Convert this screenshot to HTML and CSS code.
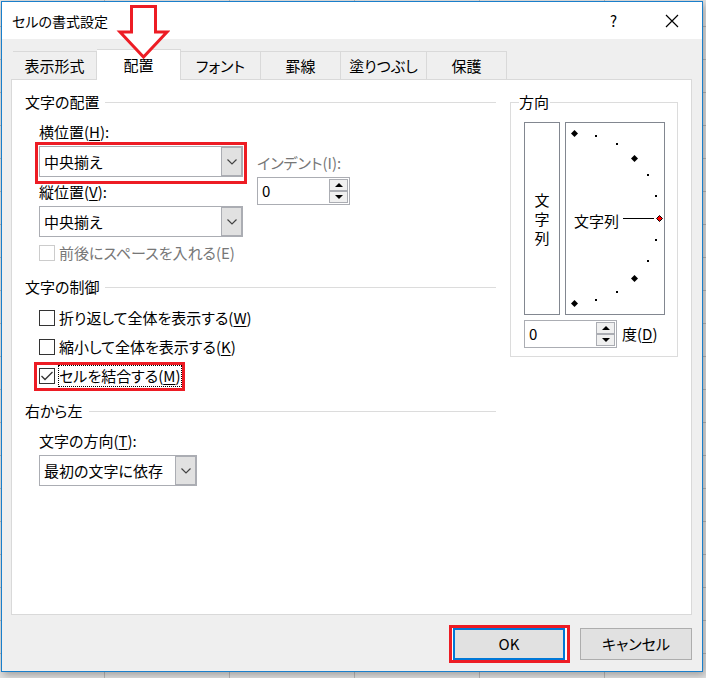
FILE: index.html
```html
<!DOCTYPE html>
<html lang="ja">
<head>
<meta charset="utf-8">
<meta name="viewport" content="width=device-width, initial-scale=1">
<title>セルの書式設定</title>
<link rel="stylesheet" href="styles.css">
</head>
<body>
<main class="dialog">
  <header class="titlebar">
    <h1 class="title">セルの書式設定</h1>
    <button class="title-button" type="button" aria-label="ヘルプ">?</button>
    <button class="title-button" type="button" aria-label="閉じる">
      <svg width="14" height="14" viewBox="0 0 14 14" aria-hidden="true"><path d="M1 1 13 13M13 1 1 13" stroke="#000" stroke-width="1.2" fill="none"/></svg>
    </button>
  </header>

  <div class="content">
    <nav class="tabs" role="tablist">
      <button class="tab tab-wide" type="button" role="tab">表示形式</button>
      <button class="tab tab-wide tab-active" type="button" role="tab" aria-selected="true">配置</button>
      <button class="tab" type="button" role="tab">フォント</button>
      <button class="tab" type="button" role="tab">罫線</button>
      <button class="tab tab-long" type="button" role="tab">塗りつぶし</button>
      <button class="tab" type="button" role="tab">保護</button>
    </nav>

    <div class="panel" role="tabpanel">
      <div class="settings">
        <h2 class="heading">文字の配置</h2>
        <div class="section placement">
          <div class="stack">
            <div class="field">
              <label for="horizontal">横位置(<u>H</u>):</label>
              <div class="select marked marked-field">
                <select id="horizontal"><option>中央揃え</option></select>
                <span class="arrow"><svg width="12" height="8" viewBox="0 0 12 8"><path d="M1.5 1.5 6 6 10.5 1.5"/></svg></span>
              </div>
            </div>
            <div class="field">
              <label for="vertical">縦位置(<u>V</u>):</label>
              <div class="select">
                <select id="vertical"><option>中央揃え</option></select>
                <span class="arrow"><svg width="12" height="8" viewBox="0 0 12 8"><path d="M1.5 1.5 6 6 10.5 1.5"/></svg></span>
              </div>
            </div>
            <div class="check">
              <input type="checkbox" id="space" disabled>
              <label for="space">前後にスペースを入れる(E)</label>
            </div>
          </div>
          <div class="field indent">
            <label class="muted" for="indent">インデント(I):</label>
            <div class="spinner">
              <input type="text" id="indent" value="0">
              <span class="steps">
                <button type="button" aria-label="増やす"><svg width="8" height="4" viewBox="0 0 8 4"><path d="M4 0 8 4H0z"/></svg></button>
                <button type="button" aria-label="減らす"><svg width="8" height="4" viewBox="0 0 8 4"><path d="M0 0H8L4 4z"/></svg></button>
              </span>
            </div>
          </div>
        </div>

        <h2 class="heading">文字の制御</h2>
        <div class="section checks">
          <div class="check">
            <input type="checkbox" id="wrap">
            <label for="wrap">折り返して全体を表示する(<u>W</u>)</label>
          </div>
          <div class="check">
            <input type="checkbox" id="shrink">
            <label for="shrink">縮小して全体を表示する(<u>K</u>)</label>
          </div>
          <div class="check marked marked-check">
            <input type="checkbox" id="merge" checked>
            <svg class="tick" width="16" height="16" viewBox="0 0 16 16" aria-hidden="true"><path d="M2.5 8 6 11.5 13.5 4"/></svg>
            <label class="focused" for="merge">セルを結合する(<u>M</u>)</label>
          </div>
        </div>

        <h2 class="heading">右から左</h2>
        <div class="section field">
          <label for="direction">文字の方向(<u>T</u>):</label>
          <div class="select select-short">
            <select id="direction"><option>最初の文字に依存</option></select>
            <span class="arrow"><svg width="12" height="8" viewBox="0 0 12 8"><path d="M1.5 1.5 6 6 10.5 1.5"/></svg></span>
          </div>
        </div>
      </div>

      <fieldset class="orientation">
        <legend>方向</legend>
        <div class="orientation-body">
          <div class="orientation-views">
            <button class="vertical-text" type="button"><span>文字列</span></button>
            <div class="dial">
              <svg width="98" height="191" viewBox="0 0 98 191">
                <g class="dial-points">
                  <path d="M8.500 7 12 10.500 8.500 14 5 10.500z"/>
                  <path d="M68.500 32 72 35.500 68.500 39 65 35.500z"/>
                  <path d="M68.500 152 72 155.500 68.500 159 65 155.500z"/>
                  <path d="M8.500 177 12 180.500 8.500 184 5 180.500z"/>
                  <path d="M29 12h2v2h-2zM50 20h2v2h-2zM81 51h2v2h-2zM89 72h2v2h-2zM89 116h2v2h-2zM81 137h2v2h-2zM50 168h2v2h-2zM29 176h2v2h-2zM57 95h31v1H57z"/>
                  <path class="dial-current" d="M93.500 92.500 96.500 95.500 93.500 98.500 90.500 95.500z"/>
                </g>
                <text x="8" y="104">文字列</text>
              </svg>
            </div>
          </div>
          <div class="degrees">
            <div class="spinner">
              <input type="text" id="degrees" value="0">
              <span class="steps">
                <button type="button" aria-label="増やす"><svg width="8" height="4" viewBox="0 0 8 4"><path d="M4 0 8 4H0z"/></svg></button>
                <button type="button" aria-label="減らす"><svg width="8" height="4" viewBox="0 0 8 4"><path d="M0 0H8L4 4z"/></svg></button>
              </span>
            </div>
            <label for="degrees">度(<u>D</u>)</label>
          </div>
        </div>
      </fieldset>
    </div>

    <footer class="actions">
      <span class="marked marked-button"><button class="action action-default" type="button">OK</button></span>
      <button class="action" type="button">キャンセル</button>
    </footer>
  </div>

  <svg class="pointer" width="54" height="58" viewBox="0 0 54 58" aria-hidden="true"><path d="M15.500 4.500H39.500V30H51L27.500 55 4 30H15.500z"/></svg>
</main>
</body>
</html>
```

FILE: styles.css
```css
* {
  box-sizing: border-box;
}

body {
  margin: 0;
  min-height: 100vh;
  padding: 1px 3px 6px 1px;
  display: flex;
  background-color: #e2e2e2;
  background-image:
    repeating-linear-gradient(to right, transparent 0 104px, #b9b9b9 104px 105px, transparent 105px 125px),
    repeating-linear-gradient(to bottom, transparent 0 26px, #b9b9b9 26px 27px, transparent 27px 33px);
  color: #000;
  font: 15px/20px "Noto Sans CJK JP", sans-serif;
  font-feature-settings: "palt";
}

button,
input,
select {
  margin: 0;
  padding: 0;
  border: 0;
  border-radius: 0;
  background: none;
  color: inherit;
  font: inherit;
  font-feature-settings: inherit;
}

h1,
h2 {
  margin: 0;
  font-size: 15px;
  font-weight: 400;
}

u {
  text-underline-offset: 2px;
}

.dialog {
  position: relative;
  flex: 1;
  display: flex;
  flex-direction: column;
  border: 1px solid #1a7fcb;
  background: #efefef;
  box-shadow: 2px 3px 8px rgba(0, 0, 0, 0.3);
}

.titlebar {
  display: flex;
  align-items: center;
  height: 37px;
  padding-left: 10px;
  background: #fff;
}

.title {
  flex: 1;
  font-size: 14px;
}

.title-button {
  width: 57px;
  height: 36px;
  display: grid;
  place-items: center;
}

.title-button:last-child {
  width: 60px;
}

.content {
  flex: 1;
  display: flex;
  flex-direction: column;
  padding: 10px 10px 11px 9px;
}

.tabs {
  display: flex;
  align-items: flex-end;
  padding-left: 2px;
}

.tab {
  width: 80px;
  height: 28px;
  border: 1px solid #d9d9d9;
  border-width: 1px 1px 0 0;
}

.tab-wide {
  width: 84px;
}

.tab-long {
  width: 86px;
}

.tab-active {
  position: relative;
  height: 31px;
  margin-bottom: -1px;
  padding-bottom: 1px;
  background: #fff;
}

.panel {
  flex: 1;
  display: flex;
  align-items: flex-start;
  gap: 14px;
  padding: 12px 13px;
  border: 1px solid #d9d9d9;
  background: #fff;
}

.settings {
  flex: 1;
}

.heading {
  display: flex;
  align-items: center;
  gap: 6px;
  margin: 15px 0 10px;
}

.heading:first-child {
  margin-top: 0;
}

.heading::after {
  content: "";
  flex: 1;
  height: 1px;
  background: #dcdcdc;
}

.section {
  margin-left: 14px;
}

.placement {
  display: flex;
  gap: 14px;
}

.stack {
  display: flex;
  flex-direction: column;
  gap: 5px;
}

.field {
  display: flex;
  flex-direction: column;
  align-items: flex-start;
  gap: 4px;
}

.indent {
  margin-top: 31px;
}

.muted {
  color: #777;
}

.select {
  position: relative;
  width: 204px;
  height: 31px;
  border: 1px solid #abadb3;
}

.select-short {
  width: 158px;
}

.select select {
  appearance: none;
  width: 100%;
  height: 100%;
  padding-left: 4px;
}

.arrow {
  position: absolute;
  top: 0;
  right: 0;
  bottom: 0;
  width: 21px;
  display: grid;
  place-items: center;
  border: 1px solid #abadb3;
  background: #e1e1e1;
  pointer-events: none;
}

.arrow path {
  fill: none;
  stroke: #444;
  stroke-width: 1.2;
}

.spinner {
  width: 93px;
  height: 28px;
  display: flex;
  padding: 1px;
  border: 1px solid #abadb3;
}

.spinner input {
  flex: 1;
  min-width: 0;
  padding-left: 3px;
}

.steps {
  width: 19px;
  display: flex;
  flex-direction: column;
}

.steps button {
  flex: 1;
  display: grid;
  place-items: center;
  border: 1px solid #abadb3;
  background: #f0f0f0;
}

.check {
  position: relative;
  display: flex;
  align-items: center;
  align-self: flex-start;
  gap: 4px;
  height: 22px;
}

.check input {
  appearance: none;
  width: 16px;
  height: 16px;
  border: 1px solid #333;
  background: #fff;
}

.check input:disabled {
  border-color: #ccc;
}

.check input:disabled + label {
  color: #777;
}

.checks {
  display: flex;
  flex-direction: column;
  gap: 7px;
}

.checks + .heading {
  margin-top: 14px;
}

.placement + .heading {
  margin-top: 13px;
}

.tick {
  position: absolute;
  left: 0;
  top: 3px;
  fill: none;
  stroke: #333;
  stroke-width: 1.3;
  pointer-events: none;
}

.focused {
  outline: 1px dotted #000;
}

/* Red callout frames drawn around the highlighted controls. */
.marked {
  position: relative;
}

.marked::after {
  content: "";
  position: absolute;
  border: 3px solid #ed1c24;
  pointer-events: none;
}

.marked-field::after {
  inset: -5px -5px -8px;
}

.marked-check::after {
  inset: -3px -4px -4px -5px;
}

.marked-button::after {
  inset: -3px -5px -3px -4px;
}

.orientation {
  width: 168px;
  margin: 0;
  padding: 0 8px;
  border: 1px solid #dcdcdc;
}

.orientation legend {
  padding: 0 1px 0 0;
}

.orientation-body {
  display: flex;
  flex-direction: column;
  gap: 5px;
  padding: 10px 4px 8px 5px;
}

.orientation-views {
  display: flex;
  gap: 5px;
}

.vertical-text {
  width: 36px;
  display: grid;
  place-items: center;
  border: 1px solid #828790;
  line-height: 19px;
}

.vertical-text span {
  width: 15px;
}

.dial {
  display: flex;
  border: 1px solid #828790;
}

.dial-current {
  fill: #f00;
  stroke: #000;
}

.degrees {
  display: flex;
  align-items: center;
  gap: 5px;
}

.actions {
  display: flex;
  justify-content: flex-end;
  gap: 15px;
  padding-top: 13px;
}

.action {
  width: 112px;
  height: 32px;
  border: 1px solid #adadad;
  background: #e1e1e1;
}

.action-default {
  display: block;
  border: 2px solid #0078d7;
}

.marked-button {
  box-shadow: 0 0 0 2px #fff;
}

.pointer {
  position: absolute;
  top: 0;
  left: 114px;
  fill: #fff;
  stroke: #ed1c24;
  stroke-width: 3;
  pointer-events: none;
}
```
